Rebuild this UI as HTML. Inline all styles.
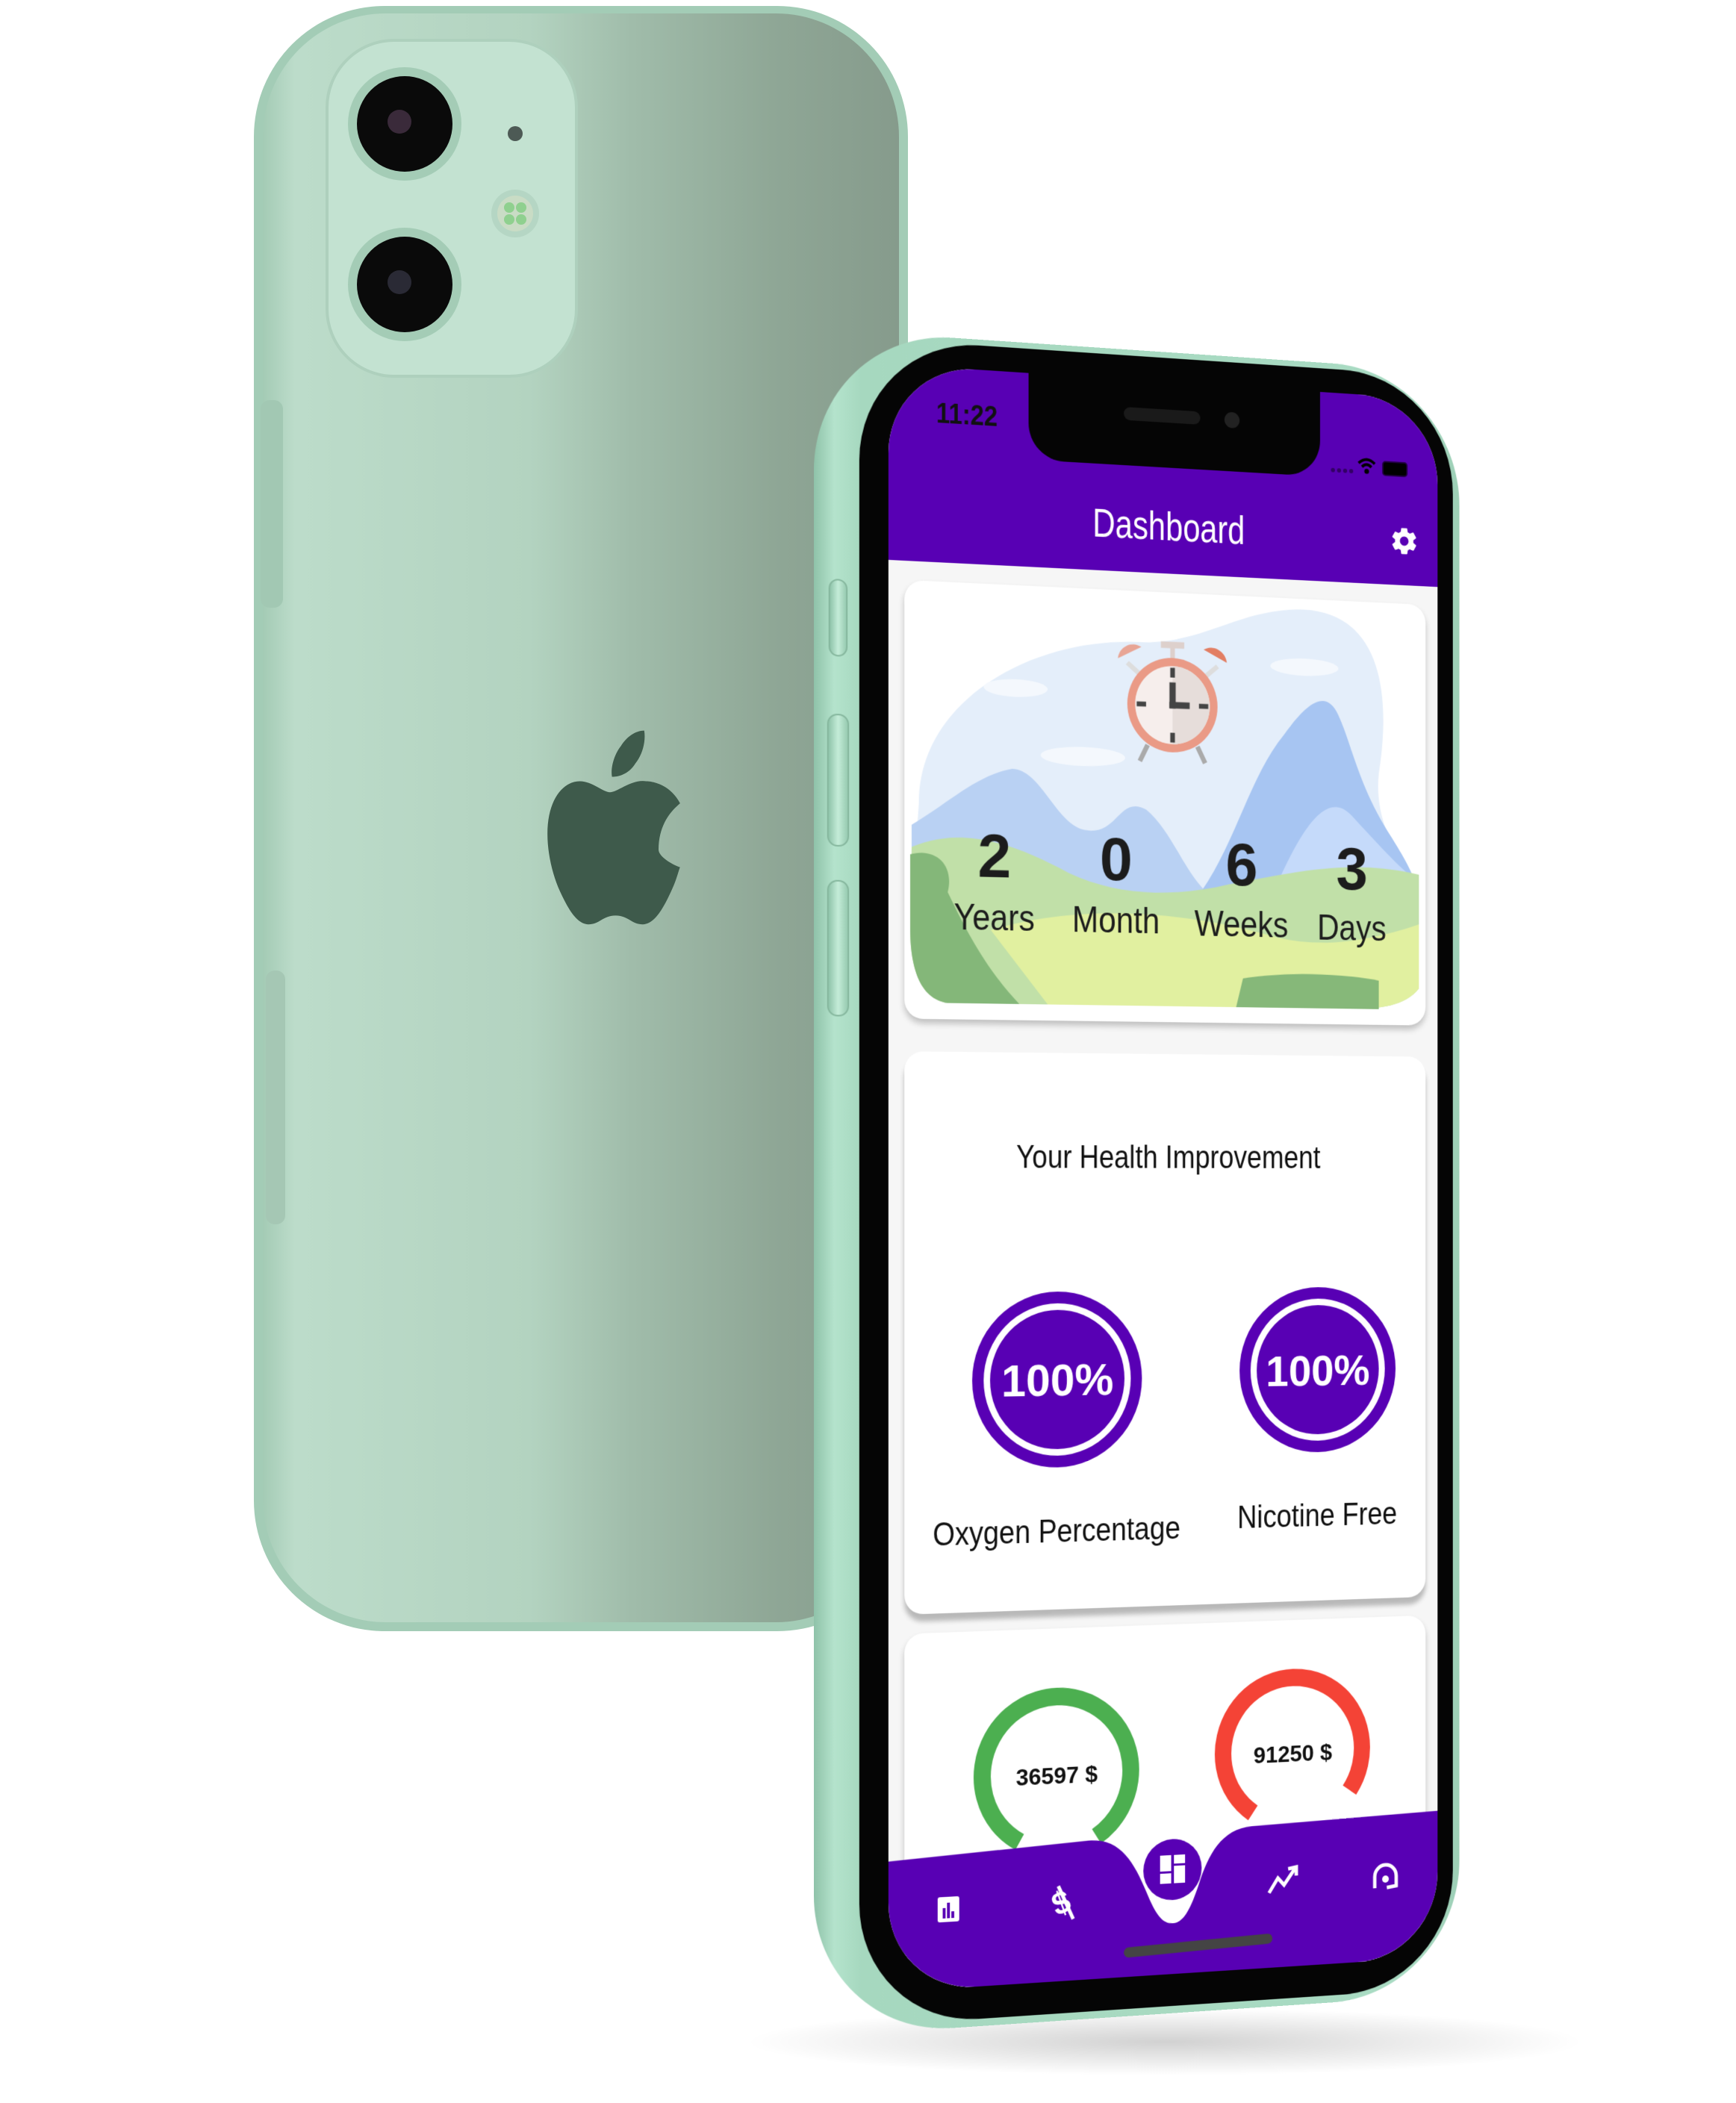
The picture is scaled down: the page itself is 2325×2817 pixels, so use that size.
<!DOCTYPE html>
<html><head><meta charset="utf-8"><style>
*{margin:0;padding:0;box-sizing:border-box}
body{width:2325px;height:2817px;background:#fff;position:relative;overflow:hidden;font-family:"Liberation Sans",sans-serif}
.abs{position:absolute}
.fp{position:absolute;left:1090px;top:440px;width:925px;height:2289px;transform-origin:0 50%;transform:perspective(3000px) rotateY(10deg)}
.frame{position:absolute;inset:0;border-radius:190px;background:linear-gradient(90deg,#8fc2a9 0%,#b4e3cc 3%,#a6d8bf 7%,#a9dbc3 92%,#9dcfb6 100%)}
.bezel{position:absolute;left:62px;top:8px;right:10px;bottom:10px;border-radius:165px;background:#050505}
.screen{position:absolute;left:102px;top:41px;width:790px;height:2194px;border-radius:120px;overflow:hidden;background:#f6f6f6}
.card{position:absolute;background:#fff;border-radius:26px;box-shadow:0 6px 8px rgba(0,0,0,.22)}
.btn{position:absolute;background:linear-gradient(90deg,#8fc4aa,#c4ecd8,#97cbb1);border-radius:14px;border:2px solid #86b79e}
.cond{display:inline-block;transform-origin:50% 50%}
</style></head><body>

<svg class="abs" style="left:0;top:0" width="2325" height="2817" viewBox="0 0 2325 2817">
<defs>
<linearGradient id="bg" x1="0" x2="1" y1="0" y2="0">
<stop offset="0" stop-color="#a4cbb5"/><stop offset="0.05" stop-color="#bcdcca"/>
<stop offset="0.42" stop-color="#b3d3c0"/><stop offset="0.58" stop-color="#a0bcaa"/>
<stop offset="0.8" stop-color="#8fa796"/><stop offset="1" stop-color="#869b8c"/>
</linearGradient>
<radialGradient id="sh" cx="0.5" cy="0.5" r="0.5"><stop offset="0" stop-color="#000" stop-opacity=".18"/><stop offset="1" stop-color="#000" stop-opacity="0"/></radialGradient>
</defs>
<ellipse cx="1560" cy="2735" rx="560" ry="45" fill="url(#sh)"/>
<rect x="340" y="8" width="876" height="2177" rx="175" fill="#a3ccb6"/>
<rect x="352" y="18" width="852" height="2155" rx="165" fill="url(#bg)"/>
<rect x="349" y="536" width="30" height="278" rx="12" fill="#a2c8b3"/>
<rect x="356" y="1300" width="26" height="340" rx="12" fill="#a5c7b4"/>
<rect x="438" y="54" width="334" height="450" rx="90" fill="#c3e2d1" stroke="#aed0bd" stroke-width="4"/>
<circle cx="542" cy="166" r="76" fill="#a4ccb6"/><circle cx="542" cy="166" r="64" fill="#0a0a0a"/><circle cx="535" cy="163" r="16" fill="#3a2a3a"/>
<circle cx="542" cy="381" r="76" fill="#a4ccb6"/><circle cx="542" cy="381" r="64" fill="#0a0a0a"/><circle cx="535" cy="378" r="16" fill="#2a2a35"/>
<circle cx="690" cy="286" r="32" fill="#b5d6c4"/><circle cx="690" cy="286" r="24" fill="#c9dcc5"/>
<circle cx="682" cy="278" r="7" fill="#8fd08f"/><circle cx="698" cy="278" r="7" fill="#8fd08f"/><circle cx="682" cy="294" r="7" fill="#8fd08f"/><circle cx="698" cy="294" r="7" fill="#8fd08f"/>
<circle cx="690" cy="179" r="10" fill="#4d5a55"/>
<g transform="translate(714,955) scale(2.4,2.95)" fill="#3e5a4b">
<path d="M70,62 C70,48 81,42 82,41 C76,32 66,31 63,31 C55,30 47,36 43,36 C39,36 33,31 26,31 C17,31 8,39 8,55 C8,64 11,74 15,81 C19,88 24,96 31,96 C37,96 39,92 46,92 C53,92 55,96 61,96 C68,96 73,88 77,81 C80,76 81,72 82,70 C81,70 70,66 70,62 Z M57,23 C61,19 63,13 62,8 C57,8 52,11 49,15 C46,18 43,24 44,29 C49,29 54,27 57,23 Z"/>
</g>
</svg>

<div class="fp">
<div class="frame"></div>
<div class="btn" style="left:20px;top:334px;width:26px;height:104px"></div>
<div class="btn" style="left:18px;top:515px;width:30px;height:178px"></div>
<div class="btn" style="left:18px;top:738px;width:30px;height:183px"></div>
<div class="bezel"></div>
<div class="screen">
  <div class="abs" style="left:0;top:0;width:790px;height:264px;background:#5800b4"></div>
  <div class="abs" style="left:195px;top:0;width:420px;height:118px;background:#050505;border-radius:0 0 50px 50px"></div>
  <div class="abs" style="left:330px;top:38px;width:110px;height:18px;background:#1a1a1a;border-radius:9px"></div>
  <div class="abs" style="left:475px;top:36px;width:22px;height:22px;background:#222;border-radius:50%"></div>
  <div class="abs" style="left:66px;top:42px;font-size:38px;color:#111;font-weight:bold;transform:scaleX(.9);transform-origin:0 0">11:22</div>
  <svg class="abs" style="left:630px;top:82px" width="120" height="40" viewBox="0 0 120 40">
    <circle cx="4" cy="26" r="3" fill="#330066"/><circle cx="13" cy="26" r="3" fill="#330066"/><circle cx="22" cy="26" r="3" fill="#330066"/><circle cx="31" cy="26" r="3" fill="#330066"/>
    <path d="M42,14 Q54,3 66,14" stroke="#000" stroke-width="4" fill="none"/><path d="M47,19 Q54,12 61,19" stroke="#000" stroke-width="4" fill="none"/><circle cx="54" cy="25" r="3.5" fill="#000"/>
    <rect x="78" y="10" width="36" height="19" rx="4" fill="#000" stroke="#220044" stroke-width="2"/>
  </svg>
  <div class="abs" style="left:0;width:790px;top:166px;text-align:center;font-size:56px;color:#fff"><span class="cond" style="transform:scaleX(.8)">Dashboard</span></div>
  <svg class="abs" style="left:718px;top:180px" width="44" height="44" viewBox="0 0 24 24"><path fill="#fff" d="M19.4 13c.04-.33.06-.66.06-1s-.02-.67-.06-1l2.1-1.650c.2-.15.25-.42.12-.64l-2-3.46c-.12-.22-.39-.3-.61-.22l-2.5 1c-.52-.4-1.08-.73-1.690-.98l-.38-2.65C14.46 2.18 14.25 2 14 2h-4c-.25 0-.46.18-.49.42l-.38 2.65c-.61.25-1.17.59-1.69.98l-2.5-1c-.23-.09-.49 0-.61.22l-2 3.46c-.13.22-.07.49.12.64L4.57 11c-.04.33-.07.67-.07 1s.03.67.07 1l-2.11 1.65c-.19.15-.24.42-.12.64l2 3.46c.12.22.39.3.61.22l2.5-1c.52.4 1.08.73 1.69.98l.38 2.65c.03.24.24.42.49.42h4c.25 0 .46-.18.49-.42l.38-2.65c.61-.25 1.17-.59 1.69-.98l2.5 1c.23.09.49 0 .61-.22l2-3.46c.12-.22.07-.49-.12-.64L19.4 13zM12 15.5c-1.93 0-3.5-1.57-3.5-3.5s1.57-3.5 3.5-3.5 3.5 1.57 3.5 3.5-1.57 3.5-3.5 3.5z"/></svg>

  <div class="card" style="left:22px;top:290px;width:750px;height:592px;overflow:hidden">
    <svg width="750" height="592" viewBox="0 0 750 592">
      <path d="M20,300 C20,160 180,70 330,70 C420,70 470,20 560,15 C680,10 700,120 680,240 C670,330 740,380 740,450 C740,530 700,560 640,565 L60,565 C20,560 5,500 10,440 Z" fill="#e4eefa"/>
      <path d="M10,330 C60,300 100,260 150,250 C190,250 210,320 250,330 C300,340 300,280 340,300 C380,330 400,400 440,420 L10,470 Z" fill="#b9d1f3"/>
      <path d="M420,410 C470,340 490,250 540,190 C570,150 600,120 620,160 C640,200 650,260 700,330 C720,360 740,390 740,420 L420,470 Z" fill="#a7c5f2"/>
      <path d="M520,420 C560,330 600,260 640,300 C680,340 720,380 740,390 L740,460 Z" fill="#c5dafa"/>
      <path d="M10,360 C80,330 150,350 230,390 C300,420 380,420 460,400 C560,380 640,360 740,380 L740,540 C720,565 680,570 640,570 L60,570 C20,565 8,520 8,470 Z" fill="#c1e0a8"/>
      <path d="M120,470 C250,430 400,440 520,470 C600,490 680,470 740,450 L740,540 C720,565 680,570 640,570 L200,570 Z" fill="#e1f0a0"/>
      <path d="M8,370 C40,360 70,380 60,420 C80,460 110,520 160,570 L60,570 C20,565 8,520 8,470 Z" fill="#84b779"/>
      <path d="M480,530 C540,520 620,520 680,530 L680,570 L470,570 Z" fill="#86b879"/>
      <ellipse cx="155" cy="140" rx="45" ry="12" fill="#f4f8fd"/>
      <ellipse cx="570" cy="95" rx="50" ry="12" fill="#f4f8fd"/>
      <ellipse cx="250" cy="230" rx="60" ry="13" fill="#f4f8fd"/>
      <g transform="translate(378,155) scale(1.12)">
        <rect x="-15" y="-78" width="30" height="8" fill="#ddd0cc"/><rect x="-3" y="-72" width="6" height="16" fill="#ddd0cc"/>
        <path d="M-40,-35 L-58,-50" stroke="#ddd" stroke-width="6"/><path d="M40,-35 L58,-50" stroke="#ddd" stroke-width="6"/>
        <path d="M-70,-55 A20,20 0 0 1 -40,-70 Z" fill="#e8a595"/><path d="M70,-55 A20,20 0 0 0 40,-70 Z" fill="#e27e63"/>
        <path d="M-32,50 L-42,70 M32,50 L42,70" stroke="#aaa" stroke-width="6"/>
        <circle r="58" fill="#ea9a86"/><circle r="48" fill="#f6eeec"/>
        <path d="M0,-48 A48,48 0 0 1 0,48 Z" fill="#e6ddda"/>
        <g fill="#444"><rect x="-3" y="-46" width="6" height="12"/><rect x="-3" y="34" width="6" height="12"/><rect x="-46" y="-3" width="12" height="6"/><rect x="34" y="-3" width="12" height="6"/>
        <rect x="-4" y="-28" width="8" height="32"/><rect x="-4" y="-4" width="26" height="8"/></g>
      </g>
      <g font-family="Liberation Sans, sans-serif" text-anchor="middle" fill="#1c1c1c">
        <text x="125" y="398" font-size="84" font-weight="bold">2</text>
        <text x="297" y="398" font-size="84" font-weight="bold">0</text>
        <text x="478" y="401" font-size="84" font-weight="bold">6</text>
        <text x="640" y="403" font-size="84" font-weight="bold">3</text>
        <g transform="scale(0.9,1)">
        <text x="139" y="470" font-size="50">Years</text>
        <text x="330" y="470" font-size="50">Month</text>
        <text x="531" y="472" font-size="50">Weeks</text>
        <text x="711" y="474" font-size="50">Days</text></g>
      </g>
    </svg>
  </div>

  <div class="card" style="left:22px;top:926px;width:750px;height:760px;box-shadow:0 10px 6px rgba(0,0,0,.25)">
    <div class="abs" style="left:0;width:750px;top:118px;text-align:center;font-size:44px;color:#111"><span class="cond" style="transform:scaleX(.88)">Your Health Improvement</span></div>
    <svg class="abs" style="left:0;top:0" width="750" height="760" viewBox="0 0 750 760">
      <g transform="translate(214,446)"><circle r="120" fill="#5800b4"/><circle r="104" fill="#fff"/><circle r="95" fill="#5800b4"/>
        <text y="22" text-anchor="middle" font-size="62" font-weight="bold" fill="#fff" font-family="Liberation Sans, sans-serif">100%</text></g>
      <g transform="translate(590,438)"><circle r="115" fill="#5800b4"/><circle r="99" fill="#fff"/><circle r="90" fill="#5800b4"/>
        <text y="22" text-anchor="middle" font-size="60" font-weight="bold" fill="#fff" font-family="Liberation Sans, sans-serif">100%</text></g>
      <g font-family="Liberation Sans, sans-serif" text-anchor="middle" fill="#111" font-size="44" transform="scale(0.9,1)">
        <text x="238" y="668">Oxygen Percentage</text><text x="655" y="656">Nicotine Free</text></g>
    </svg>
  </div>

  <div class="card" style="left:22px;top:1712px;width:750px;height:520px">
    <svg class="abs" style="left:0;top:0" width="750" height="520" viewBox="0 0 750 520">
      <g transform="translate(213,198) rotate(120)"><circle r="105" fill="none" stroke="#4caf50" stroke-width="24" stroke-dasharray="545 1000"/></g>
      <text x="213" y="212" text-anchor="middle" font-size="32" font-weight="bold" fill="#111" font-family="Liberation Sans, sans-serif">36597 $</text>
      <g transform="translate(553,182) rotate(125)"><circle r="102" fill="none" stroke="#f44336" stroke-width="24" stroke-dasharray="480 1000"/></g>
      <text x="553" y="197" text-anchor="middle" font-size="32" font-weight="bold" fill="#111" font-family="Liberation Sans, sans-serif">91250 $</text>
    </svg>
  </div>

  <svg class="abs" style="left:0;top:0" width="790" height="2194" viewBox="0 0 790 2194">
    <path d="M0,2018 L280,2004 C325,2002 345,2038 362,2078 C376,2112 386,2124 400,2124 C414,2124 424,2112 438,2072 C452,2032 470,1998 515,1996 L790,1988 L790,2194 L0,2194 Z" fill="#5800b4"/>
    <circle cx="400" cy="2050" r="42" fill="#5800b4"/>
    <g fill="#fff"><rect x="382" y="2030" width="16" height="22"/><rect x="402" y="2030" width="16" height="12"/><rect x="382" y="2055" width="16" height="14"/><rect x="402" y="2045" width="16" height="24"/></g>
    <rect x="68" y="2070" width="30" height="34" rx="3" fill="#fff"/><rect x="75" y="2085" width="4" height="14" fill="#5800b4"/><rect x="81" y="2078" width="4" height="21" fill="#5800b4"/><rect x="87" y="2090" width="4" height="9" fill="#5800b4"/>
    <text x="241" y="2102" text-anchor="middle" font-size="44" font-weight="bold" fill="#fff" font-family="Liberation Sans, sans-serif" transform="rotate(-20 241 2087)">$</text>
    <path d="M237,2064 L258,2110" stroke="#fff" stroke-width="5"/>
    <path d="M540,2090 L553,2070 L562,2080 L578,2058 M568,2058 L580,2056 L580,2068" stroke="#fff" stroke-width="5" fill="none"/>
    <path d="M696,2092 L696,2076 A16,16 0 0 1 728,2076 L728,2090 L714,2092" stroke="#fff" stroke-width="5" fill="none"/><circle cx="712" cy="2080" r="5" fill="#fff"/>
    <rect x="330" y="2150" width="215" height="14" rx="7" fill="#444" transform="rotate(-2 437 2157)"/>
  </svg>
</div>
</div>
</body></html>
